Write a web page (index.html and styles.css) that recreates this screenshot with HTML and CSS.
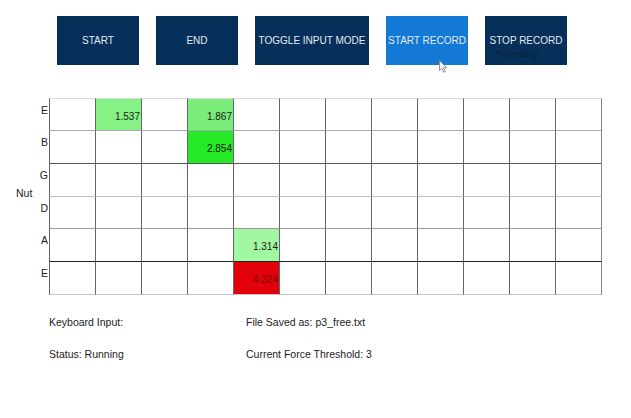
FILE: index.html
```html
<!DOCTYPE html>
<html>
<head>
<meta charset="utf-8">
<link rel="stylesheet" href="styles.css">
</head>
<body>
<div class="toolbar">
  <button class="btn">START</button>
  <button class="btn">END</button>
  <button class="btn wide">TOGGLE INPUT MODE</button>
  <button class="btn active">START RECORD
    <svg class="cursor" width="9" height="13" viewBox="0 0 9 13"><path d="M0.5 0.5 L0.5 10.5 L3 8.3 L4.8 12.3 L6.3 11.6 L4.6 7.8 L7.8 7.8 Z" fill="#f4f4f4" stroke="#8a8a8a" stroke-width="0.9"/></svg>
  </button>
  <button class="btn">STOP RECORD<span class="sub">Recording</span></button>
</div>

<div class="board">
  <div class="nut">Nut</div>
  <div class="grid">
    <div class="row r1"><span class="lbl">E</span><div class="c"></div><div class="c g1">1.537</div><div class="c"></div><div class="c g2">1.867</div><div class="c"></div><div class="c"></div><div class="c"></div><div class="c"></div><div class="c"></div><div class="c"></div><div class="c"></div><div class="c"></div></div>
    <div class="row r2"><span class="lbl">B</span><div class="c"></div><div class="c"></div><div class="c"></div><div class="c g3">2.854</div><div class="c"></div><div class="c"></div><div class="c"></div><div class="c"></div><div class="c"></div><div class="c"></div><div class="c"></div><div class="c"></div></div>
    <div class="row r3"><span class="lbl">G</span><div class="c"></div><div class="c"></div><div class="c"></div><div class="c"></div><div class="c"></div><div class="c"></div><div class="c"></div><div class="c"></div><div class="c"></div><div class="c"></div><div class="c"></div><div class="c"></div></div>
    <div class="row r4"><span class="lbl">D</span><div class="c"></div><div class="c"></div><div class="c"></div><div class="c"></div><div class="c"></div><div class="c"></div><div class="c"></div><div class="c"></div><div class="c"></div><div class="c"></div><div class="c"></div><div class="c"></div></div>
    <div class="row r5"><span class="lbl">A</span><div class="c"></div><div class="c"></div><div class="c"></div><div class="c"></div><div class="c g4">1.314</div><div class="c"></div><div class="c"></div><div class="c"></div><div class="c"></div><div class="c"></div><div class="c"></div><div class="c"></div></div>
    <div class="row r6"><span class="lbl">E</span><div class="c"></div><div class="c"></div><div class="c"></div><div class="c"></div><div class="c hot">4.324</div><div class="c"></div><div class="c"></div><div class="c"></div><div class="c"></div><div class="c"></div><div class="c"></div><div class="c"></div></div>
  </div>
</div>

<div class="info">
  <div>Keyboard Input:</div>
  <div>File Saved as: p3_free.txt</div>
  <div>Status: Running</div>
  <div>Current Force Threshold: 3</div>
</div>
</body>
</html>
```

FILE: styles.css
```css
* { box-sizing: border-box; }
body {
  margin: 0;
  background: #ffffff;
  color: #1c1c1c;
  font-family: "Liberation Sans", Arial, sans-serif;
}
.toolbar {
  display: flex;
  gap: 17px;
  padding: 16px 0 0 57px;
}
.btn {
  position: relative;
  width: 82px;
  height: 49px;
  padding: 0;
  border: none;
  background: #063059;
  color: #e2eaf2;
  font-family: "Liberation Sans", Arial, sans-serif;
  font-size: 10px;
  white-space: nowrap;
}
.btn.wide { width: 114px; }
.btn.active { background: #1479d4; }
.sub {
  position: absolute;
  left: 10px;
  top: 33px;
  font-size: 9.3px;
  line-height: 11px;
  color: #0b1f36;
}
.cursor {
  position: absolute;
  left: 53px;
  top: 44px;
}
.board {
  display: flex;
  margin-top: 33px;
  padding-left: 16px;
}
.nut {
  width: 20px;
  align-self: center;
  margin-bottom: 7px;
  font-size: 10.5px;
  line-height: 13px;
}
.grid {
  display: grid;
  grid-template-columns: 13px repeat(11, 46px) 47px;
  grid-template-rows: 32px 33px 33px 32px 33px 34px;
}
.row { display: contents; }
.lbl {
  justify-self: end;
  padding: 6px 1px 0 0;
  font-size: 10.5px;
  line-height: 12px;
}
.c {
  border-left: 1px solid #666;
  border-top: 1px solid #999;
  text-align: right;
  padding: 11px 1px 0 0;
  font-size: 10px;
  line-height: 13px;
  color: #1a1a1a;
}
.row .c:last-child { border-right: 1px solid #858585; }
.r1 .c { border-top-color: #dadada; }
.r2 .c { border-top-color: #a8a8a8; }
.r3 .c { border-top-color: #555; }
.r4 .c { border-top-color: #bdbdbd; }
.r5 .c { border-top-color: #9a9a9a; }
.r6 .c { border-top-color: #222; border-bottom: 1px solid #c8c8c8; }
.g1 { background: #86f286; }
.g2 { background: #7aec7a; }
.g3 { background: #26ea26; }
.g4 { background: #a2f8a2; }
.hot { background: #e2000a; color: #7a0006; }
.info {
  display: grid;
  grid-template-columns: 197px auto;
  row-gap: 19px;
  padding-left: 49px;
  margin-top: 21px;
  font-size: 10.5px;
  line-height: 13px;
}
```
